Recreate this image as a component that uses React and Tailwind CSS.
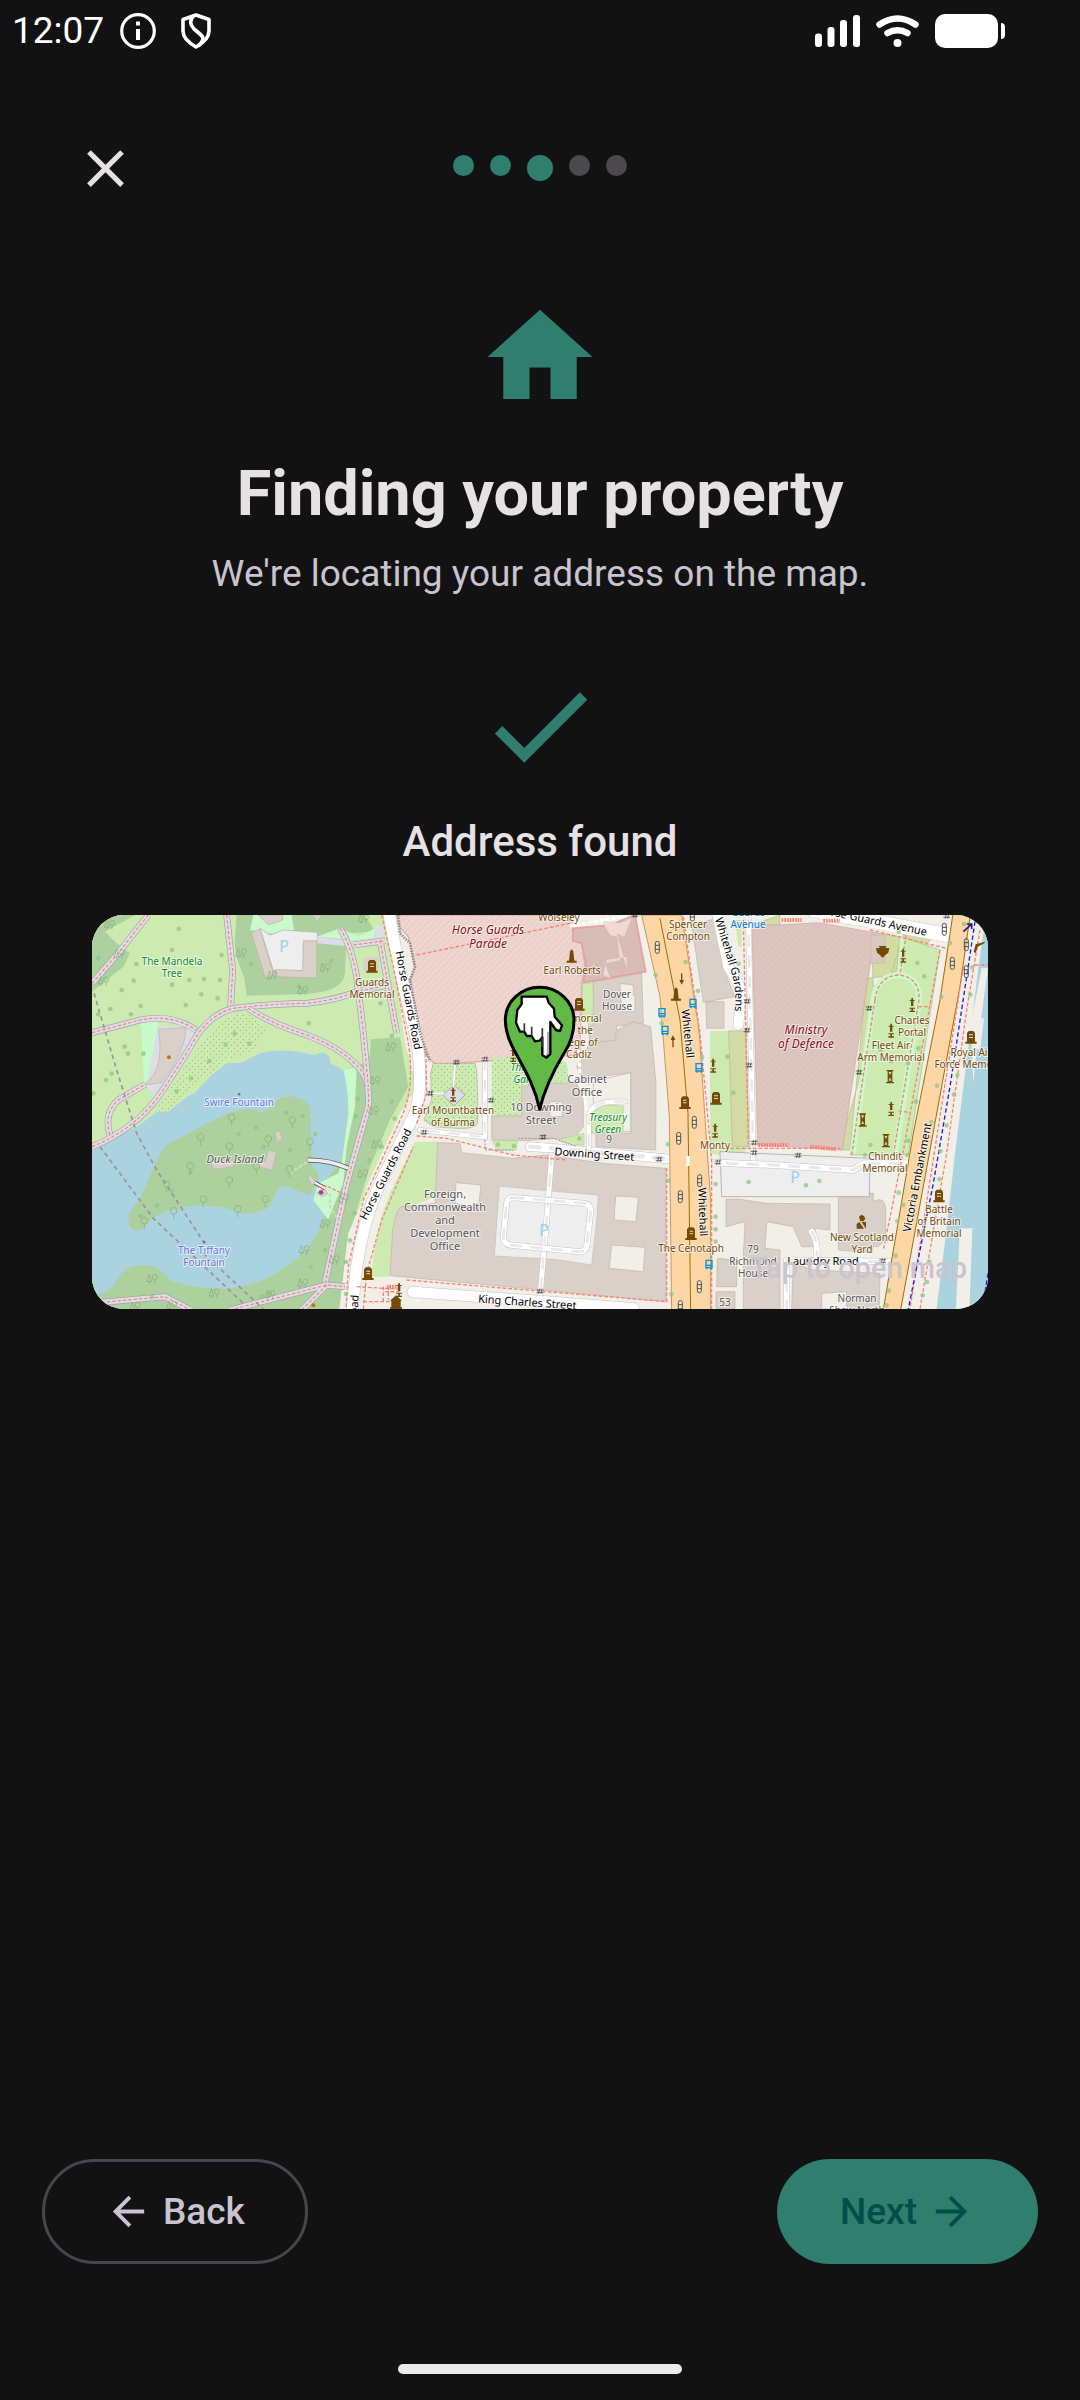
import { useState } from 'react';
import { MdArrowBack, MdArrowForward, MdCheck, MdClose, MdHome } from 'react-icons/md';

const STEPS = 5;
const currentStep = 2;

const COLORS = {
  poi: '#734a08',
  water: '#6474e0',
  green: '#0f8a2f',
  building: '#555555',
  military: '#8b0d16',
  road: '#000000',
  parking: '#9bcfe8',
  transit: '#0073e0',
};

// [x, y, lines, kind, size, italic, rotation]
const labels = [
  [80, 50, ['The Mandela', 'Tree'], 'green', 10],
  [147, 191, ['Swire Fountain'], 'water', 10],
  [143, 248, ['Duck Island'], 'building', 11, true],
  [112, 339, ['The Tiffany', 'Fountain'], 'water', 10],
  [280, 71, ['Guards', 'Memorial'], 'poi', 10],
  [396, 19, ['Horse Guards', 'Parade'], 'military', 12, true],
  [467, 6, ['Wolseley'], 'poi', 10],
  [480, 59, ['Earl Roberts'], 'poi', 10],
  [525, 83, ['Dover', 'House'], 'building', 10],
  [487, 107, ['Memorial', 'to the', 'Siege of', 'Cádiz'], 'poi', 10],
  [495, 168, ['Cabinet', 'Office'], 'building', 11],
  [438, 156, ['The Rose', 'Garden'], 'green', 10, true],
  [449, 196, ['10 Downing', 'Street'], 'building', 11],
  [516, 206, ['Treasury', 'Green'], 'green', 10, true],
  [517, 228, ['9'], 'building', 10],
  [361, 199, ['Earl Mountbatten', 'of Burma'], 'poi', 10],
  [353, 283, ['Foreign,', 'Commonwealth', 'and', 'Development', 'Office'], 'building', 11],
  [596, 13, ['Spencer', 'Compton'], 'poi', 10],
  [599, 337, ['The Cenotaph'], 'poi', 10],
  [656, 1, ['Guards', 'Avenue'], 'transit', 10],
  [714, 119, ['Ministry', 'of Defence'], 'military', 12, true],
  [820, 109, ['Charles', 'Portal'], 'poi', 10],
  [799, 134, ['Fleet Air', 'Arm Memorial'], 'poi', 10],
  [879, 141, ['Royal Air', 'Force Memorial'], 'poi', 10],
  [793, 245, ['Chindit', 'Memorial'], 'poi', 10],
  [847, 298, ['Battle', 'of Britain', 'Memorial'], 'poi', 10],
  [770, 326, ['New Scotland', 'Yard'], 'poi', 10],
  [661, 338, ['79', 'Richmond', 'House'], 'building', 10],
  [765, 387, ['Norman', 'Shaw North'], 'building', 10],
  [633, 391, ['53'], 'building', 10],
  [623, 234, ['Monty'], 'poi', 10],
  [192, 37, ['P'], 'parking', 16],
  [452, 321, ['P'], 'parking', 16],
  [703, 268, ['P'], 'parking', 16],
  [502, 243, ['Downing Street'], 'road', 11, false, 4],
  [435, 391, ['King Charles Street'], 'road', 11, false, 4],
  [731, 350, ['Laundry Road'], 'road', 11],
  [313, 86, ['Horse Guards Road'], 'road', 11, false, 79],
  [297, 261, ['Horse Guards Road'], 'road', 11, false, -63],
  [264, 430, ['Horse Guards Road'], 'road', 11, false, -87],
  [592, 119, ['Whitehall'], 'road', 11, false, 84],
  [607, 297, ['Whitehall'], 'road', 11, false, 88],
  [829, 263, ['Victoria Embankment'], 'road', 11, false, -79],
  [779, 9, ['Horse Guards Avenue'], 'road', 11, false, 12],
];

const trees = [
  [55, 175], [296, 87], [276, 150], [425, 165], [372, 237], [161, 242], [328, 240], [276, 254], [125, 270],
  [420, 240], [364, 283], [413, 295], [317, 315], [182, 318], [91, 327], [153, 343], [134, 440], [144, 461],
  [190, 461], [95, 521], [78, 540], [40, 580], [686, 370], [464, 401], [437, 434], [508, 431], [388, 483],
  [333, 535], [290, 574], [514, 193], [754, 183], [657, 260], [902, 310], [935, 408], [618, 638], [668, 648],
  [528, 682], [706, 702], [630, 750], [551, 740], [476, 701], [331, 818], [275, 873], [231, 916], [182, 948],
  [833, 596], [827, 648], [944, 656], [868, 782], [824, 940], [810, 1021], [798, 1086], [735, 1051],
  [692, 1102], [798, 1182], [216, 1190], [545, 1190], [568, 1180], [169, 192], [54, 343],
  [935, 605], [905, 740], [1727, 225], [1817, 186], [1854, 273], [1745, 370], [1866, 471], [1976, 191],
  [1942, 470], [1960, 578], [1907, 852], [1907, 950], [1907, 988], [1907, 1025], [2006, 846], [2178, 856],
  [2218, 843], [1254, 734], [1302, 738], [1498, 716], [1764, 733], [1766, 842], [1774, 1182], [2512, 189],
  [2533, 229], [2584, 291], [2516, 445], [2402, 450], [2434, 483], [2484, 490], [2371, 735], [2355, 765],
  [2484, 722], [2482, 765], [2508, 605], [2571, 557], [2554, 667], [2456, 95], [2610, 129], [2652, 72],
  [2676, 202], [2671, 284], [2632, 525], [2622, 584], [2600, 676], [2582, 754], [2578, 838], [2456, 878],
  [2469, 915], [2452, 963], [2447, 1067], [2427, 1172], [2420, 1216], [2541, 1146], [2528, 1186], [2548, 1085],
];

const outlineTrees = [
  [455, 652], [637, 660], [362, 711], [565, 717], [448, 738], [331, 798], [260, 853], [448, 840],
  [529, 798], [370, 897], [556, 897], [193, 962], [628, 807], [690, 725], [473, 927], [281, 932],
];

const treePairs = [
  [118, 160], [70, 242], [483, 158], [735, 202], [668, 270], [850, 55], [932, 440], [885, 540], [880, 630],
  [890, 732], [848, 820], [790, 895], [735, 970], [672, 1048], [762, 1078], [668, 1148], [216, 1135],
  [402, 1178], [570, 1182], [275, 1215], [165, 1218], [88, 72], [576, 225],
];

const monuments = [
  [876, 198], [864, 1120], [1497, 312], [1815, 607], [1833, 1000], [1908, 594], [2673, 411], [2577, 887],
];
const columns = [[1475, 168], [1788, 282]];
const statues = [
  [1119, 584], [1299, 465], [1899, 497], [1905, 692], [2469, 167], [2496, 315], [2433, 392], [2433, 627],
  [957, 1170],
];
const hourglasses = [[2430, 530], [2348, 660], [2418, 722]];
const signals = [
  [1732, 142], [1843, 667], [1796, 715], [1859, 842], [1801, 890], [1858, 1160], [1801, 1220], [2593, 88],
  [2617, 190], [2659, 134], [2659, 215], [1837, 45],
];
const busStops = [[1746, 338], [1755, 391], [1839, 310], [1857, 503], [1887, 1093]];
const gates = [
  [1129, 487], [1215, 478], [1050, 580], [1233, 601], [1032, 697], [1389, 711], [1380, 1174], [1737, 778],
  [2001, 304], [2001, 391], [2007, 496], [2022, 728], [2022, 758], [2154, 766], [1914, 787], [2367, 325],
  [2337, 517], [2408, 1083], [1665, 45], [2600, 48],
];

const footways = [
  'M36 250L110 165 205 45', 'M440 45L450 140 458 210 452 320',
  'M36 398L180 360Q280 340 355 395', 'M36 740Q160 690 235 590Q290 510 355 400Q400 340 460 325Q560 312 680 310Q770 300 830 275L925 255',
  'M505 325Q560 365 680 405Q800 450 850 520Q870 560 865 620L800 850 735 1150',
  'M780 85Q815 140 830 230L850 400 865 560', 'M820 135L915 122M900 120Q925 260 950 400',
  'M90 705Q70 640 115 600L195 553', 'M65 1207L255 1190 350 1240M450 1230L740 1155 795 1160M740 1155L660 1235',
];

function Footway({ d }) {
  return (
    <g fill="none">
      <path d={d} stroke="#a3a3a3" strokeWidth="20" />
      <path d={d} stroke="#dddde8" strokeWidth="16" />
      <path d={d} stroke="#fa8072" strokeWidth="3.500" strokeDasharray="10 6" />
    </g>
  );
}

function Road({ d, width = 34, dashed = false }) {
  return (
    <g fill="none" strokeLinecap="round" strokeLinejoin="round">
      <path d={d} stroke="#c4c2be" strokeWidth={width + 3} />
      <path d={d} stroke="#ffffff" strokeWidth={width} />
      {dashed && <path d={d} stroke="#e8e8e8" strokeWidth={width / 2} strokeDasharray="30 32" />}
    </g>
  );
}

function MapLabel({ label }) {
  const [x, y, lines, kind, size, italic, rotation] = label;
  const step = size === 12 ? 14 : size === 11 ? 13 : 12;
  return (
    <text
      transform={`translate(${x} ${y}) rotate(${rotation || 0})`}
      textAnchor="middle"
      fontSize={size}
      fontStyle={italic ? 'italic' : 'normal'}
      fill={COLORS[kind]}
      stroke="#ffffff"
      strokeOpacity={kind === 'parking' ? 0 : 0.65}
      strokeWidth="2"
      strokeLinejoin="round"
      paintOrder="stroke"
    >
      {lines.map((line, i) => (
        <tspan key={line} x="0" y={i * step}>{line}</tspan>
      ))}
    </text>
  );
}

function Areas() {
  return (
    <g>
      <path d="M0 0H2760V1260H0z" fill="#f2efe9" />

      {/* St James's Park */}
      <path d="M0 0H920L975 430 1010 560 960 640 860 860 780 1260H0z" fill="#cdebb0" />
      <path d="M36 45H165L75 95 110 130 150 160 130 200 36 275z" fill="#add19e" />
      <path d="M470 45H855L885 95 800 100 795 220Q790 275 680 282L500 287 492 230Q460 160 465 120z" fill="#add19e" />
      <path d="M520 45H635L642 90 600 105 510 90zM710 110L780 85 835 110 885 85V115L815 120z" fill="#c8facc" />
      <path d="M870 465L872 418 960 412 985 560 930 660 870 800 800 1030 778 1260H36V1100L700 900 790 510 850 490z" fill="#add19e" />
      <path d="M470 340L505 340 560 385 520 455 440 480 330 570 260 635H235Q230 610 260 580L370 420Q420 360 470 340z" fill="url(#scrub)" />
      <path d="M36 745L170 680 232 635H265L320 590 345 578 395 525 440 490 485 488 540 460Q610 440 705 466Q735 445 750 475V490L790 510Q810 560 804 640L785 780 740 840 705 890Q740 920 733 950Q700 1050 610 1105Q550 1150 450 1165Q350 1170 270 1140Q230 1090 180 1095Q130 1100 110 1140Q90 1180 36 1190z" fill="#aad3df" />
      <path d="M790 510L830 500 825 620 800 740 790 850 760 920 745 960 700 900 715 850 775 820 785 790 805 640Q805 560 790 510z" fill="#c8facc" />
      <path d="M145 960Q145 930 175 905L240 760 260 735 390 665Q500 610 545 637 570 628 590 600 650 570 690 620L697 800Q725 815 710 850L690 885 610 857Q590 860 570 920 530 945 480 938 380 900 280 930 220 940 190 985 150 1005 145 960z" fill="#add19e" />
      <path d="M182 365H232L240 440 235 500 220 540 192 545z" fill="#c8facc" />
      <path d="M232 382L320 375 360 395 300 500 235 600 200 560z" fill="#dddde8" />
      <path d="M235 388L318 382Q320 450 245 548L192 555Q225 530 235 490 245 440 235 388z" fill="#d9d0c9" stroke="#bfb3a8" strokeWidth="2" />
      <path d="M540 85L570 105 610 90 712 97V125L670 130V212H580z" fill="#eeeeee" stroke="#aaa" strokeWidth="2" />
      <path d="M712 110L830 125 880 120 885 78H915L910 125 820 140 712 130z" fill="#dddde8" />
      <g fill="#d9d0c9" stroke="#c0b0a5" strokeWidth="2">
        <path d="M535 45H608V60L565 75zM514 98L540 87 582 225 556 234zM587 208L668 212 670 122H710V234L587 230zM695 45H725L712 65z" />
        <path d="M585 696L602 694 606 722 590 725zM565 751L590 757 576 810 532 800 535 788 555 785zM395 785L460 780V800L398 808zM683 833L693 827 710 850 695 855zM710 880L735 865 742 882 725 890z" />
      </g>
      <path d="M852 172H895V212H848z" fill="#d9d0c9" />

      {/* west side of Horse Guards Road */}
      <path d="M960 640L1008 620 1000 700 900 950 870 1130 850 1227H778L805 1000z" fill="#f2efe9" />
      <path d="M1005 725H1075L1070 890 960 930 940 1000 928 1130H875Q880 1000 930 880z" fill="#cdebb0" />

      {/* Horse Guards Parade */}
      <path d="M950 45H1475L1480 125H1505L1515 200 1505 250 1500 465 1065 493 1035 460 990 240 1005 205 985 110 958 80z" fill="#edd6cf" />
      <path d="M950 45H1475L1480 125H1505L1515 200 1505 250 1500 465 1065 493 1035 460 990 240 1005 205 985 110 958 80z" fill="url(#hatch)" stroke="#e5acac" strokeWidth="4" />
      <path d="M1480 85L1590 75 1665 45 1697 215 1510 248 1518 190 1505 130 1478 122z" fill="#d8bdb9" stroke="#e5a0a0" strokeWidth="5" />
      <path d="M1480 85L1590 75 1665 45 1697 215 1510 248 1518 190 1505 130 1478 122z" fill="url(#hatch)" />
      <path d="M1565 60L1590 105 1612 110 1620 180 1575 190 1590 235 1570 225 1580 180 1640 170V205L1610 100 1632 110 1655 55 1620 70z" fill="#f1d9d3" />
      <path d="M1507 250L1540 248 1542 375 1605 370 1598 425 1530 430 1525 370 1507 360z" fill="#cdebb0" stroke="#b5cba0" strokeWidth="2" />

      {/* gardens behind Downing Street */}
      <path d="M1060 490H1185Q1194 500 1193 670Q1185 688 1130 685L1060 680 1032 660 1055 600 1052 520z" fill="#cdebb0" stroke="#aaa" strokeWidth="2" />
      <path d="M1060 490H1185Q1194 500 1193 670Q1185 688 1130 685L1060 680 1032 660 1055 600 1052 520z" fill="url(#scrub)" />
      <path d="M1235 475L1350 465 1460 485 1466 548 1400 552 1325 558V648H1235z" fill="#cdebb0" />
      <path d="M1235 475L1350 465 1460 485 1466 548 1400 552 1325 558V648H1235z" fill="url(#scrub)" />
      <path d="M1088 585L1122 555 1155 585 1122 618z" fill="#dddde8" stroke="#aaa" strokeWidth="3" />

      {/* Whitehall buildings */}
      <g fill="#d9d0c9" stroke="#c3b2a6" strokeWidth="2">
        <path d="M1540 245L1685 220 1690 370 1610 378 1605 430 1530 435 1525 380 1540 375z" />
        <path d="M1530 430L1610 420 1612 390 1660 365 1712 380 1728 550 1727 750 1548 740V700H1652V518L1525 535 1510 548 1490 500z" />
        <path d="M1325 560L1400 550H1490L1510 600V680L1485 712 1334 722 1235 720V648H1325z" />
        <path d="M1073 728L1140 730 1145 758 1300 775 1400 765 1570 790 1757 805V1205L1600 1190 930 1127 938 990Q950 920 965 920L1065 910z" />
        <path d="M1835 75L1910 55 1940 230 1965 290 1870 307zM1878 305H1932V385H1880z" />
        <path d="M1938 898L1980 898 2060 910 2250 912V990L2205 985V1040H2165L2140 980 2060 965 2055 1045 2100 1050V1227H1990V1070L1995 965 1938 980z" />
        <path d="M2275 875L2380 880V905Q2415 885 2417 930V1000Q2410 1045 2378 1040V1058L2275 1050z" />
        <path d="M2140 1090L2200 1110 2400 1120 2398 1227H2135zM1912 1075L1970 1080V1160H1910zM1908 1175H1965V1227H1908z" />
      </g>
      <g fill="#f2efe9" stroke="#c3b2a6" strokeWidth="2">
        <path d="M1128 848L1203 855 1195 925 1125 910zM1607 888L1675 892 1668 965 1602 960zM1595 1035L1695 1042 1690 1115 1588 1105zM1620 250L1660 255V285H1665V335H1625zM1410 605H1447V650H1410z" />
        <path d="M1540 545L1652 518V695H1540z" />
        <path d="M2225 1180L2300 1175V1227H2225z" />
      </g>
      <path d="M1535 640L1570 615 1630 618V690L1535 700zM1238 722H1312L1308 750H1250zM1435 720L1512 700V735H1480z" fill="#cdebb0" stroke="#b5cba0" strokeWidth="2" />
      <path d="M1258 858L1400 872 1555 885 1550 960 1535 1095 1425 1078 1243 1068z" fill="#eeeeee" stroke="#c9beb4" strokeWidth="2" />

      {/* Ministry of Defence */}
      <path d="M1890 393H2000V745L1980 775 1890 760z" fill="#cdebb0" />
      <path d="M1946 393H1998L2008 740 1957 738zM2018 75L2100 45V75zM2475 85L2560 110 2455 225 2360 235 2310 750H2275zM2374 97L2460 110 2450 210 2380 260z" fill="#d3dba5" stroke="#b7b88c" strokeWidth="2" />
      <path d="M2016 80L2215 68 2385 98 2287 750 2033 735z" fill="#dcc6c0" stroke="#c7a7a2" strokeWidth="2" />
      <path d="M2016 80L2215 68 2385 98 2287 750 2033 735z" fill="url(#hatch)" />
      <path d="M2385 270Q2395 225 2455 220L2465 110 2580 150 2485 765H2312z" fill="#cdebb0" stroke="#9ebc8e" strokeWidth="2" />
      <path d="M2470 110L2460 225Q2390 225 2380 300L2318 760M2460 225Q2520 235 2517 300L2445 765" fill="none" stroke="#c8facc" strokeWidth="18" />
      <path d="M1965 60H1985V140H1975z" fill="#cdebb0" />
      <path d="M2372 105H2415V190H2372z" fill="#d9c8c0" stroke="#b9a79c" />
      <path d="M1920 755L2370 775 2368 890H1925z" fill="#eeeeee" stroke="#999" strokeWidth="2" />

      {/* Thames */}
      <path d="M2710 100L2740 120V1240H2568L2600 985 2625 760 2695 205z" fill="#aad3df" />
      <path d="M2672 370L2705 205H2724L2690 450 2680 550z" fill="#f2efe9" />
      <path d="M2704 353L2712 356 2700 450 2688 445zM2640 985H2677L2668 1240H2627z" fill="#f2efe9" />
    </g>
  );
}

function Roads() {
  return (
    <g>
      {footways.map((d) => (
        <Footway key={d} d={d} />
      ))}
      <path d="M683 780Q750 780 805 805" fill="none" stroke="#555" strokeWidth="15" />
      <path d="M683 780Q750 780 805 805" fill="none" stroke="#eee" strokeWidth="10" />
      <path d="M628 820L683 785M750 880V920L775 960" fill="none" stroke="#cfdcc5" strokeWidth="7" strokeDasharray="12 5" />
      <path d="M705 848L735 865" stroke="#444" strokeWidth="12" />
      <path d="M705 848L735 865" stroke="#fff" strokeWidth="7" />
      <path d="M715 862L740 858 790 882" fill="none" stroke="#fa8072" strokeWidth="4" strokeDasharray="10 5" />
      <g fill="none" stroke="#9a9299" strokeWidth="5" strokeDasharray="13 11">
        <path d="M42 280L110 510 170 700 230 810 370 1025M60 740L220 955 490 1210M370 1060L550 1227" />
      </g>

      <Road d="M925 30L955 190 1010 420Q1030 560 1005 640L900 850Q850 960 830 1100L815 1240" />
      <Road d="M1215 480V712L1020 690" width={13} dashed />
      <Road d="M1350 740L1420 745 1780 778" width={26} dashed />
      <Road d="M1415 765L1405 900 1380 1190" width={15} dashed />
      <Road d="M1300 893L1515 910Q1532 915 1532 935L1520 1040Q1515 1056 1495 1055L1290 1035Q1270 1030 1270 1010L1280 910Q1283 893 1300 893z" width={16} dashed />
      <Road d="M1635 605Q1530 600 1526 650V745" width={13} dashed />
      <Road d="M998 1176L1400 1205 1660 1225" width={32} />
      <Road d="M1125 495L1120 560M1060 580H1090" width={5} />
      <path d="M1495 430L1500 520 1522 640" stroke="#fff" strokeWidth="9" strokeDasharray="14 5" fill="none" />
      <path d="M1470 78L1640 48" stroke="#fff" strokeWidth="10" strokeDasharray="14 4" />
      <Road d="M1910 35L1945 200 1985 270 1975 375" width={30} />
      <Road d="M2005 45L2012 400 2020 795" width={15} dashed />
      <Road d="M1880 787L2080 795 2320 810 2350 790 2480 790" width={18} dashed />
      <Road d="M2200 30L2600 105" width={42} />
      <Road d="M2195 995Q2215 1020 2210 1080M2120 1080V1240M2120 1080L2430 1085" width={17} dashed />

      {/* A3211 and Whitehall */}
      <path d="M1685 45H1805L1830 210 1858 400 1880 730 1892 900V1240H1775L1768 650 1740 290z" fill="#fcd6a4" stroke="#c79a5d" strokeWidth="3" />
      <path d="M1740 55L1800 360 1824 640 1832 1240" fill="none" stroke="#a06b00" strokeWidth="3" />
      <path d="M1824 768V798" stroke="#fff" strokeWidth="10" />
      <path d="M2620 35H2672L2640 260 2460 1240H2408L2500 700 2580 300z" fill="#fcd6a4" stroke="#a06b00" strokeWidth="3" />
      <g fill="none" stroke="#fa8072" strokeWidth="4" strokeDasharray="11 6">
        <path d="M905 45L940 200 985 430Q1005 560 965 650L850 900 805 1100 798 1227M1038 460L1040 580 1010 670M1010 708L1100 715 1300 765 1460 780M1550 760L1660 770M980 1140L1400 1175 1760 1205V800M850 1227L860 1120 905 960 1000 740" />
        <path d="M830 1160L960 1168M910 1160V1210M850 1205H950M915 1175H965M925 1160V1200" />
        <path d="M1990 60L2005 740M1810 50L1860 400 1895 780V1227M2478 105L2460 225M2385 300Q2395 225 2460 225 2520 235 2517 300L2440 765M2385 300L2345 560 2315 765" />
        <path d="M2370 90L2600 145M2580 150L2465 780 2410 1050M2700 90L2660 330 2600 760 2520 1227M2650 200L2490 1227M1010 165L1470 70" />
        <path d="M2515 320H2550M2455 632L2490 638M1900 745H2280M2685 195H2724" />
      </g>
      <g fill="none" stroke="#fa8072" strokeWidth="12" strokeDasharray="5 3">
        <path d="M2105 60H2165M2230 62H2280M2035 735H2125M2190 740L2270 748M920 1160H955" />
      </g>
      <path d="M2685 65L2610 560 2560 850 2485 1227M2724 1120L2705 1240" fill="none" stroke="#1a1af0" strokeWidth="4" strokeDasharray="13 8" />
      <path d="M955 45L960 100 990 130 1005 200 990 240 1020 400 1050 485" fill="none" stroke="#888" strokeWidth="8" strokeDasharray="4 4" />
      <path d="M1215 720V750H1300M1315 715H1420L1490 740" fill="none" stroke="#999" strokeWidth="3" strokeDasharray="6 4" />
    </g>
  );
}

function Symbols() {
  return (
    <g>
      <g fill="#92c585" opacity="0.75">
        {trees.map(([x, y]) => (
          <circle key={`${x}-${y}`} cx={x} cy={y} r="7" />
        ))}
      </g>
      <g fill="none" stroke="#84aa78" strokeWidth="2">
        {outlineTrees.map(([x, y]) => (
          <path key={`${x}-${y}`} d={`M${x - 10} ${y}a10 10 0 1 0 20 0a10 10 0 1 0-20 0M${x} ${y + 10}v15`} />
        ))}
        {treePairs.map(([x, y]) => (
          <path key={`${x}-${y}`} d={`M${x - 8} ${y - 12}l-7 22h14zM${x - 8} ${y + 10}v6M${x + 1} ${y - 3}a7 8 0 1 0 14 0a7 8 0 1 0-14 0M${x + 8} ${y + 5}v11`} />
        ))}
      </g>
      <g fill={COLORS.poi}>
        {monuments.map(([x, y]) => (
          <path key={`${x}-${y}`} fillRule="evenodd" d={`M${x - 17} ${y + 20}v-6h5v-26l5-6h14l5 6v26h5v6zM${x - 6} ${y - 8}h12v3h-12zM${x - 6} ${y}h12v3h-12z`} />
        ))}
        {columns.map(([x, y]) => (
          <path key={`${x}-${y}`} d={`M${x - 15} ${y + 20}v-6h7l3-28 5-6 5 6 3 28h7v6z`} />
        ))}
        {statues.map(([x, y]) => (
          <path key={`${x}-${y}`} d={`M${x - 2} ${y - 21}h5v6h5v3h-4v15h-7v-15h-4v-3h5zM${x - 8} ${y + 8}h17v3h-17zM${x - 2} ${y + 11}h5v6h-5zM${x - 8} ${y + 17}h17v4h-17z`} />
        ))}
        {hourglasses.map(([x, y]) => (
          <path key={`${x}-${y}`} fillRule="evenodd" d={`M${x - 10} ${y - 20}h20v4h-3v32h5v4h-24v-4h5v-32h-3zM${x - 4} ${y - 14}h8l-4 10zM${x - 4} ${y + 12}h8l-4-10z`} />
        ))}
        <path d="M2396 138h24l-4 6h12l-3 14-10 8-4 6h-6l-4-6-10-8-3-14h12z" />
        <path d="M2337 950l7-6 8 4 4 8-6 8h-9zM2330 986v-14l8-6 14 20zM2345 966h13v20z" />
        <path d="M930 1227v-5h4v-20h-4l18-16 18 16h-4v20h4v5zM2681 155l6-22 28-8-2 5-20 10-6 20z" />
        <path d="M1803 220h4v20h5l-7 14-7-14h5zM1777 442h4v-22h5l-7-14-7 14h5z" />
      </g>
      <g fill="#fff" fillOpacity="0.3" stroke="#4d4d4d" strokeWidth="3">
        {signals.map(([x, y]) => (
          <path key={`${x}-${y}`} d={`M${x - 6} ${y - 12}q0-6 6-6t6 6v24q0 6-6 6t-6-6zM${x - 6} ${y - 6}h12M${x - 6} ${y + 6}h12`} />
        ))}
      </g>
      <g stroke="#333" strokeWidth="2">
        {gates.map(([x, y]) => (
          <path key={`${x}-${y}`} d={`M${x - 10} ${y - 4}h20M${x - 10} ${y + 4}h20M${x - 4} ${y + 8}l3-16M${x + 3} ${y + 8}l3-16`} />
        ))}
      </g>
      <g fill="none" stroke="#0092da" strokeWidth="4">
        {busStops.map(([x, y]) => (
          <path key={`${x}-${y}`} d={`M${x - 9} ${y - 12}h18v22h-18zM${x - 9} ${y + 3}h18M${x - 6} ${y + 10}v5M${x + 6} ${y + 10}v5`} />
        ))}
      </g>
      <path d="M2650 95L2674 73M2660 72h15v15" fill="none" stroke="#1b1b7a" strokeWidth="5" />
      <g fill="#c77400">
        <circle cx="267" cy="472" r="6" />
        <circle cx="700" cy="1216" r="6" />
      </g>
      <circle cx="723" cy="877" r="7" fill="#ac39ac" />
      <path d="M474 579h7v7h-7zM369 1023h7v7h-7z" fill="#5566e0" />
    </g>
  );
}

function Pin() {
  return (
    <g strokeLinejoin="round">
      <path d="M1379 628C1365 560 1335 510 1305 455 1285 420 1276 390 1276 360A103 98 0 0 1 1482 360C1482 395 1472 430 1452 460 1422 510 1395 560 1379 628z" fill="#63b946" stroke="#000" strokeWidth="9" />
      <path d="M1325 290H1400L1406 308 1422 326 1424 350 1446 376 1440 393 1428 390 1411 366V462L1400 473 1387 466V412L1379 422 1365 424 1355 408 1340 408 1333 395H1320L1308 368 1312 330 1325 312z" fill="#fff" stroke="#000" strokeWidth="7" />
      <path d="M1333 370V395M1355 380V408M1387 385V440" stroke="#333" strokeWidth="5" fill="none" />
      <path d="M1404 395V462L1396 468" stroke="#888" strokeWidth="4" fill="none" />
    </g>
  );
}

function AddressMap() {
  return (
    <svg viewBox="0 0 896 394" className="block w-full font-['Noto_Sans',sans-serif]" role="img" aria-label="Map of 10 Downing Street">
      <defs>
        <pattern id="scrub" width="18" height="18" patternUnits="userSpaceOnUse">
          <circle cx="4" cy="4" r="1.6" fill="#6da85e" />
          <circle cx="13" cy="13" r="1.6" fill="#6da85e" />
        </pattern>
        <pattern id="hatch" width="14" height="14" patternUnits="userSpaceOnUse" patternTransform="rotate(45)">
          <path d="M0 0V14" stroke="#e9a5a5" strokeWidth="3" opacity="0.55" />
        </pattern>
        <path id="whitehall-gardens" d="M623 4L637 50Q645 70 643 96" />
      </defs>
      <g transform="translate(-12 -15) scale(0.33333)">
        <Areas />
        <Roads />
        <Symbols />
      </g>
      {labels.map((label) => (
        <MapLabel key={`${label[0]}-${label[1]}`} label={label} />
      ))}
      <text fontSize="11" stroke="#fff" strokeWidth="2" strokeOpacity="0.65" paintOrder="stroke">
        <textPath href="#whitehall-gardens">Whitehall Gardens</textPath>
      </text>
      <g transform="translate(-12 -15) scale(0.33333)">
        <Pin />
      </g>
    </svg>
  );
}

function StatusBar() {
  return (
    <div className="flex h-[62px] items-center justify-between pr-[75px] pl-3 text-white">
      <div className="flex items-center">
        <span className="text-[37px] leading-10">12:07</span>
        <svg viewBox="0 0 36 36" className="ml-4 size-9" fill="none" stroke="currentColor">
          <circle cx="18" cy="18" r="16.3" strokeWidth="3.2" />
          <path d="M18 16v11M18 8.5v4" strokeWidth="4" />
        </svg>
        <svg viewBox="0 0 30 36" className="ml-[25px] h-9 w-[30px]" fill="none" stroke="currentColor" strokeWidth="3.6" strokeLinejoin="round">
          <path d="M15 2L28 6.500V18C28 25 22 30 15 34C8 30 2 25 2 18V6.500z" />
          <path d="M13 2.500C8 7 9 12 13 16L19 21C24 25 22 29 17 33" />
        </svg>
      </div>
      <div className="flex items-center gap-4">
        <svg viewBox="0 0 45 32" className="h-8 w-[45px]" fill="currentColor">
          <rect x="0" y="18.500" width="7" height="13.500" rx="3" />
          <rect x="12.500" y="12" width="7" height="20" rx="3" />
          <rect x="25" y="5" width="7" height="27" rx="3" />
          <rect x="38" y="0" width="7" height="32" rx="3" />
        </svg>
        <svg viewBox="0 0 43 32" className="h-8 w-[43px]" fill="none" stroke="currentColor" strokeWidth="6.500" strokeLinecap="round">
          <path d="M3.500 9.500Q21.500-2.500 39.500 9.500M11.500 18Q21.500 12.500 31.500 18" />
          <circle cx="21.500" cy="28" r="4" fill="currentColor" stroke="none" />
        </svg>
        <div className="flex items-center gap-[3px]">
          <span className="h-[34px] w-[63px] rounded-[10px] bg-white" />
          <span className="h-4 w-1 rounded-r-sm bg-white" />
        </div>
      </div>
    </div>
  );
}

function StepDots() {
  return (
    <div className="flex items-start gap-4 pt-[18px]" aria-label={`Step ${currentStep + 1} of ${STEPS}`}>
      {Array.from({ length: STEPS }, (_, i) => {
        const size = i === currentStep ? 'size-[26px]' : 'size-[21px]';
        const color = i <= currentStep ? 'bg-[#2f7e6e]' : 'bg-[#4b494e]';
        return <span key={i} className={`rounded-full ${size} ${color}`} />;
      })}
    </div>
  );
}

export default function App() {
  const [mapOpen, setMapOpen] = useState(false);

  return (
    <div className="flex min-h-screen flex-col bg-[#121212] font-[Roboto,sans-serif] text-[#e6e1e5]">
      <StatusBar />

      <header className="grid grid-cols-[1fr_auto_1fr] items-start px-[74px] pt-[75px]">
        <button type="button" aria-label="Close" className="justify-self-start">
          <MdClose size={63} />
        </button>
        <StepDots />
      </header>

      <main className="flex flex-1 flex-col items-center px-[92px] pt-[94px] text-center">
        <MdHome size={126} className="text-[#2f7e6e]" />
        <h1 className="mt-8 text-[63px] leading-[84px] font-bold">Finding your property</h1>
        <p className="mt-3 text-[37px] leading-[52px] text-[#cac4d0]">We're locating your address on the map.</p>

        <MdCheck size={126} className="mt-[63px] text-[#2f7e6e]" />
        <h2 className="mt-[21px] text-[42px] leading-[63px] font-medium">Address found</h2>

        <button
          type="button"
          aria-pressed={mapOpen}
          onClick={() => setMapOpen(!mapOpen)}
          className="relative mt-[42px] w-full overflow-hidden rounded-[32px]"
        >
          <AddressMap />
          <span className="absolute right-[21px] bottom-[21px] text-[29px] leading-10 font-medium text-[#cac4d0]">Tap to open map</span>
        </button>
      </main>

      <footer className="px-[42px] pb-[26px]">
        <div className="flex items-center justify-between text-[37px] leading-[52px] font-medium">
          <button type="button" className="flex h-[105px] items-center gap-[11px] rounded-full border-3 border-[#49454f] px-[60px] text-[#cac4d0]">
            <MdArrowBack size={47} />
            Back
          </button>
          <button type="button" className="flex h-[105px] items-center gap-[11px] rounded-full bg-[#2f7e6e] px-[63px] text-[#00504a]">
            Next
            <MdArrowForward size={47} />
          </button>
        </div>
        <div className="mx-auto mt-[100px] h-[10px] w-[284px] rounded-full bg-[#ebebeb]" />
      </footer>
    </div>
  );
}
